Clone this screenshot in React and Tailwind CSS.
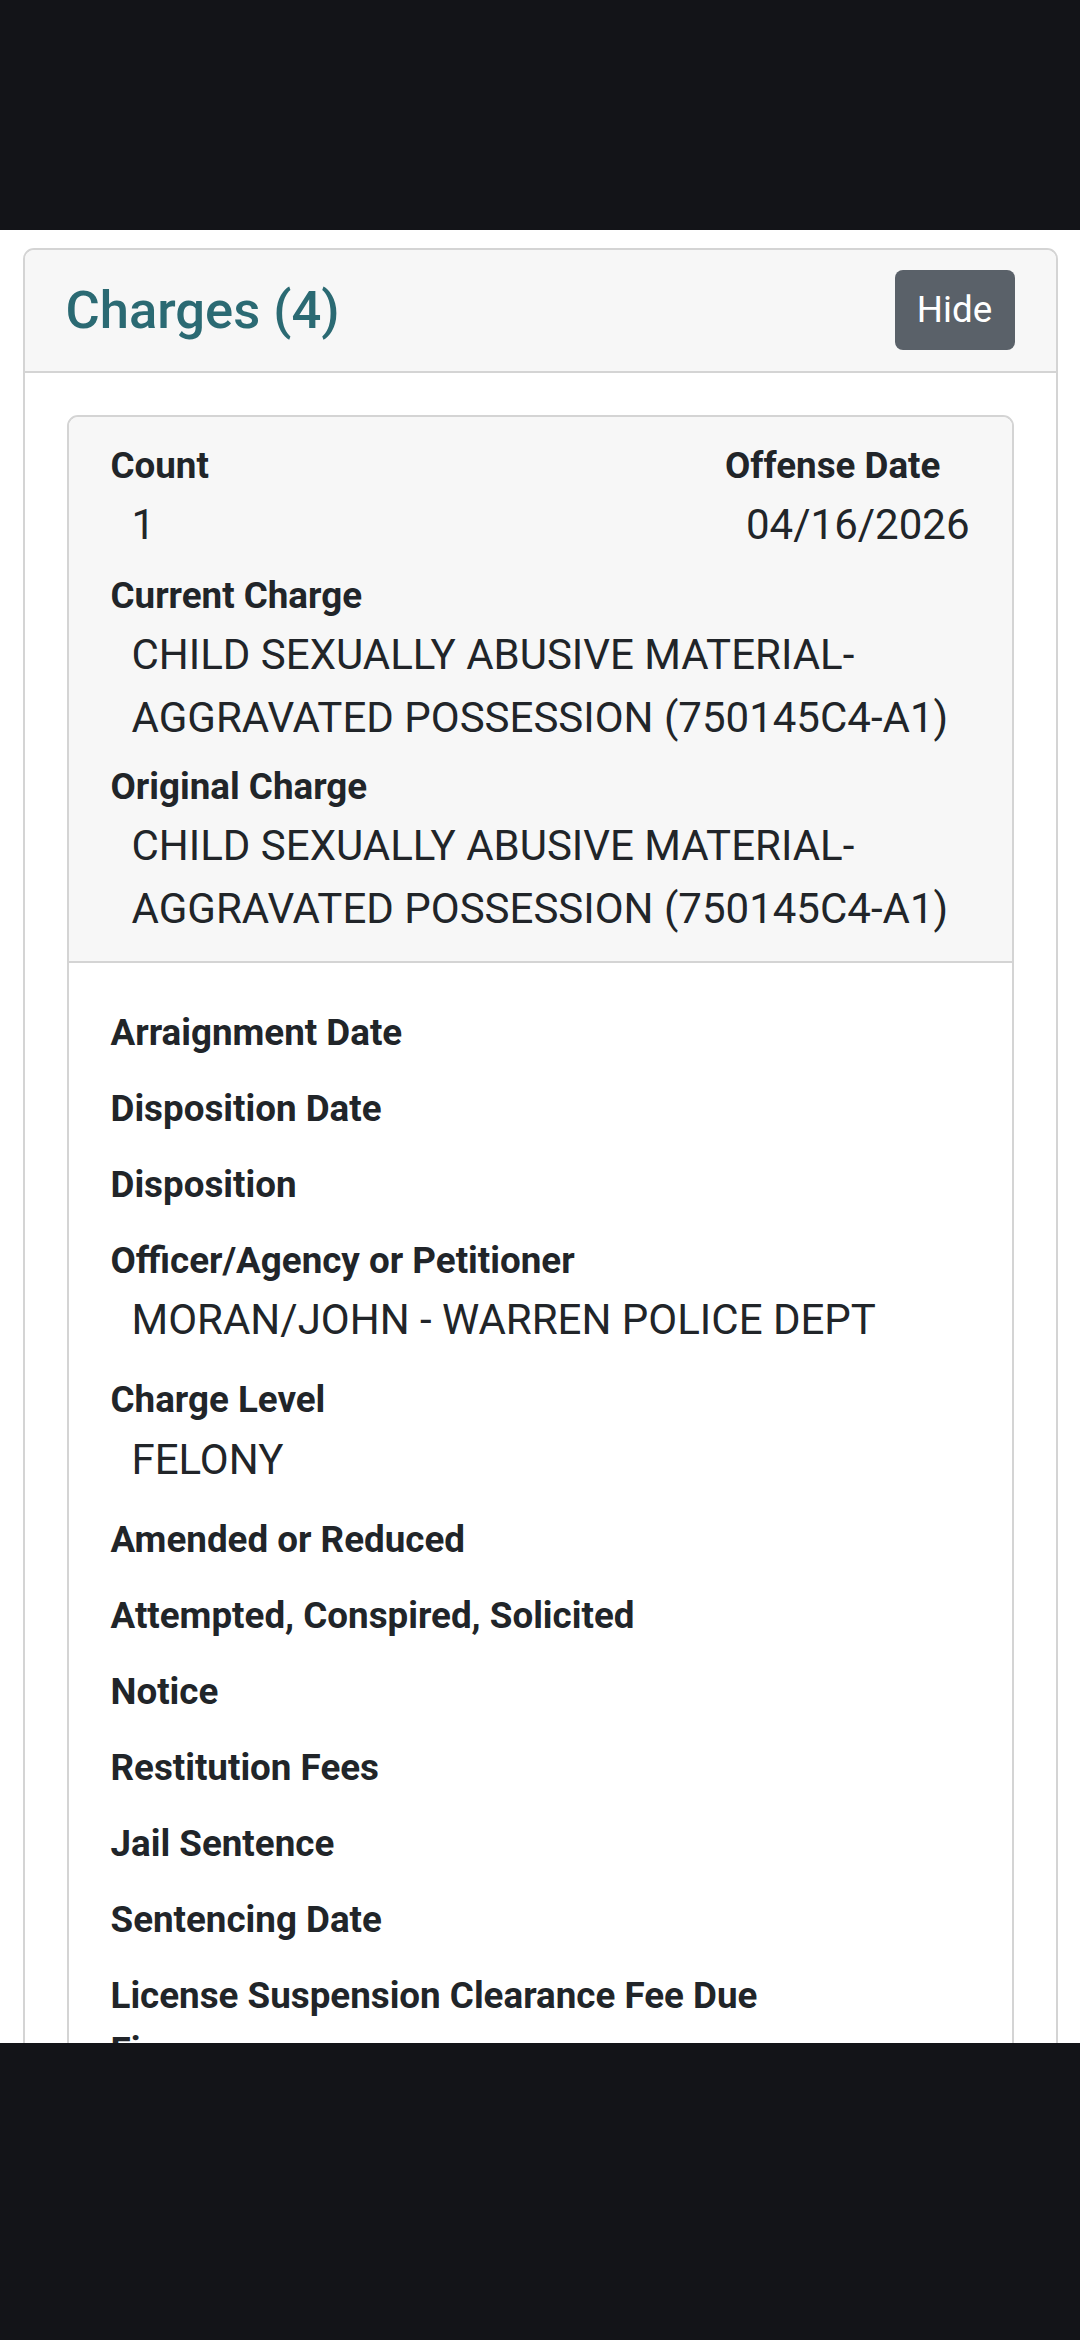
const headerItems = [
  { label: "Current Charge", value: "CHILD SEXUALLY ABUSIVE MATERIAL-AGGRAVATED POSSESSION (750145C4-A1)" },
  { label: "Original Charge", value: "CHILD SEXUALLY ABUSIVE MATERIAL-AGGRAVATED POSSESSION (750145C4-A1)" },
];

const bodyItems = [
  { label: "Arraignment Date" },
  { label: "Disposition Date" },
  { label: "Disposition" },
  { label: "Officer/Agency or Petitioner", value: "MORAN/JOHN - WARREN POLICE DEPT" },
  { label: "Charge Level", value: "FELONY" },
  { label: "Amended or Reduced" },
  { label: "Attempted, Conspired, Solicited" },
  { label: "Notice" },
  { label: "Restitution Fees" },
  { label: "Jail Sentence" },
  { label: "Sentencing Date" },
];

function Label({ children }) {
  return <div className="text-[36.75px] font-bold leading-[1.5] text-[#212529]">{children}</div>;
}

function Value({ children }) {
  return <div className="pl-[21px] text-[42px] leading-[1.5] text-[#212529]">{children}</div>;
}

export default function App() {
  return (
    <div className="flex flex-col bg-[#131418] font-['Roboto',sans-serif]" style={{ height: 2340 }}>
      <div className="h-[230px] shrink-0 bg-[#131418]" />

      <div className="h-[1813px] shrink-0 overflow-hidden bg-white px-[22.5px] pt-[17.5px]">
        <div className="rounded-[11px] border-[2.6px] border-[#d4d4d4]">
          <div className="flex items-center justify-between rounded-t-[9px] border-b-[2.6px] border-[#d4d4d4] bg-[#f7f7f7] px-[41px] py-[20.5px]">
            <h3 className="text-[52.5px] font-medium leading-[1.2] text-[#2b6a73]">Charges (4)</h3>
            <button className="flex h-[80px] w-[120px] items-center justify-center rounded-[8px] bg-[#5a6169] text-[36.75px] text-white">
              Hide
            </button>
          </div>

          <div className="p-[42px]">
            <div className="rounded-[11px] border-[2.6px] border-[#d4d4d4]">
              <div className="rounded-t-[9px] border-b-[2.6px] border-[#d4d4d4] bg-[#f7f7f7] px-[42px] py-[21px]">
                <div className="mb-[12px] flex justify-between">
                  <div>
                    <Label>Count</Label>
                    <Value>1</Value>
                  </div>
                  <div>
                    <Label>Offense Date</Label>
                    <Value>04/16/2026</Value>
                  </div>
                </div>
                {headerItems.map((item, i) => (
                  <div key={item.label} className={i === headerItems.length - 1 ? "" : "mb-[10px]"}>
                    <Label>{item.label}</Label>
                    <Value>{item.value}</Value>
                  </div>
                ))}
              </div>

              <div className="px-[42px] py-[42px]">
                {bodyItems.map((item) => (
                  <div key={item.label} className="mb-[21px]">
                    <Label>{item.label}</Label>
                    {item.value && <Value>{item.value}</Value>}
                  </div>
                ))}
                <div className="mb-[21px]">
                  <Label>License Suspension Clearance Fee Due</Label>
                  <Label>Fines</Label>
                </div>
              </div>
            </div>
          </div>
        </div>
      </div>

      <div className="flex-1 bg-[#131418]" />
    </div>
  );
}
